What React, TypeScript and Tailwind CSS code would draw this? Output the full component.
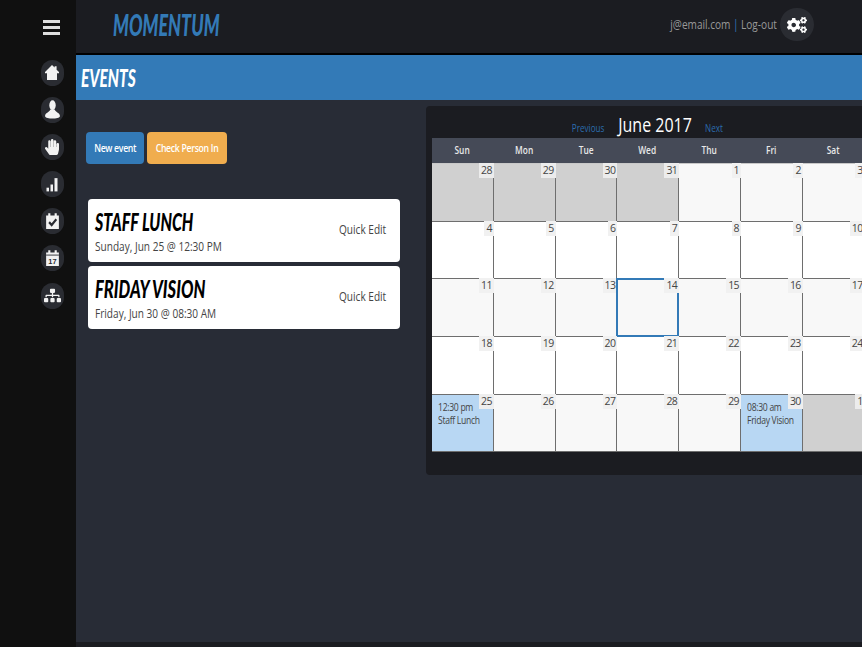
import React from 'react';
import { FaHandPaper, FaSitemap, FaCogs } from 'react-icons/fa';

const HomeIcon = () => (
  <svg viewBox="0 0 16 16" className="h-[17px] w-4" fill="currentColor" preserveAspectRatio="none">
    <path d="M8 1 L1 7.6 V8.8 H3 V15 H13 V8.8 H15 V7.6 L12.6 5.3 V2 H10.6 V3.4 Z" />
  </svg>
);

const UserIcon = () => (
  <svg viewBox="0 0 16 16" className="h-[19px] w-[17px]" fill="currentColor" preserveAspectRatio="none">
    <ellipse cx="8" cy="4.4" rx="3" ry="4.2" />
    <path d="M1 13.4 C1 10.8 5 10.6 6 8 H10 C11 10.6 15 10.8 15 13.4 C15 15 11 15.6 8 15.6 C5 15.6 1 15 1 13.4 Z" />
  </svg>
);

const SignalIcon = () => (
  <svg viewBox="0 0 16 16" className="h-[17px] w-4" fill="currentColor" preserveAspectRatio="none">
    <rect x="2.5" y="11" width="2.5" height="3.5" />
    <rect x="6.5" y="8" width="2.5" height="6.5" />
    <rect x="10.5" y="2" width="3" height="12.5" />
  </svg>
);

const CalendarCheckIcon = () => (
  <svg viewBox="0 0 16 16" className="h-[18px] w-[17px]" preserveAspectRatio="none">
    <path fill="currentColor" d="M2 3 H4 V1 H6 V3 H10 V1 H12 V3 H14 V15 H2 Z" />
    <path fill="none" stroke="#2a2c32" strokeWidth="2" d="M4.8 9 L7.2 11.6 L11.6 6.4" />
  </svg>
);

const CalendarDayIcon = () => (
  <svg viewBox="0 0 16 16" className="h-[18px] w-[17px]" preserveAspectRatio="none">
    <path fill="currentColor" d="M2 3 H4 V1 H6 V3 H10 V1 H12 V3 H14 V15 H2 Z" />
    <rect x="2" y="5" width="12" height="0.8" fill="#2a2c32" />
    <text x="8" y="13.4" textAnchor="middle" fontSize="7" fontWeight="700" fill="#2a2c32" fontFamily="Liberation Sans">17</text>
  </svg>
);

const navIcons = [
  <HomeIcon />,
  <UserIcon />,
  <FaHandPaper className="text-base" />,
  <SignalIcon />,
  <CalendarCheckIcon />,
  <CalendarDayIcon />,
  <FaSitemap className="text-[17px]" />,
];

const weekDays = ['Sun', 'Mon', 'Tue', 'Wed', 'Thu', 'Fri', 'Sat'];

type Tone = 'muted' | 'white' | 'soft' | 'event';
type Day = { n: number; tone: Tone; today?: boolean; time?: string; title?: string };

const makeRow = (nums: number[], tone: Tone): Day[] => nums.map((n) => ({ n, tone }));

const rows: Day[][] = [
  [...makeRow([28, 29, 30, 31], 'muted'), ...makeRow([1, 2, 3], 'soft')],
  makeRow([4, 5, 6, 7, 8, 9, 10], 'white'),
  makeRow([11, 12, 13, 14, 15, 16, 17], 'soft').map((d) => ({ ...d, today: d.n === 14 })),
  makeRow([18, 19, 20, 21, 22, 23, 24], 'white'),
  [
    { n: 25, tone: 'event', time: '12:30 pm', title: 'Staff Lunch' },
    { n: 26, tone: 'soft' },
    { n: 27, tone: 'soft' },
    { n: 28, tone: 'soft' },
    { n: 29, tone: 'soft' },
    { n: 30, tone: 'event', time: '08:30 am', title: 'Friday Vision' },
    { n: 1, tone: 'muted' },
  ],
];

const toneClass = {
  muted: 'bg-[#d0d0d0]',
  white: 'bg-white',
  soft: 'bg-[#f8f8f8]',
  event: 'bg-[#b8d7f3]',
};

const labelTone = {
  muted: 'bg-[#ececec]',
  white: 'bg-[#f1f1f1]',
  soft: 'bg-[#f1f1f1]',
  event: 'bg-[#eeeeee]',
};

const DayCell = ({ day }: { day: Day }) => (
  <div className={`relative h-full border-r border-b border-[#6e6e6e] ${toneClass[day.tone]}`}>
    {day.today && <div className="absolute -top-px -right-px -bottom-px -left-px border-2 border-[#337ab7]" />}
    <span className={`absolute -top-px -right-px min-w-2 px-0.5 pt-[2px] pb-[2px] text-right text-[10.5px] leading-[11px] tracking-[-0.6px] text-[#444] ${labelTone[day.tone]}`}>
      {day.n}
    </span>
    {day.time && (
      <div className="origin-left scale-x-[0.86] px-[7px] pt-1.5 text-[10px] leading-[13px] tracking-[-0.35px] whitespace-nowrap text-[#444]">
        <p>{day.time}</p>
        <p>{day.title}</p>
      </div>
    )}
  </div>
);

const EventCard = ({ title, when, stretch }: { title: string; when: string; stretch: string }) => (
  <div className="flex h-[63px] items-center justify-between rounded bg-white pl-[7px] pr-[14px]">
    <div>
      <h3 className={`origin-left font-['Lato',sans-serif] text-[25px] font-black italic leading-[28px] whitespace-nowrap text-black uppercase ${stretch}`}>
        {title}
      </h3>
      <p className="mt-1 origin-left scale-x-[0.84] text-xs leading-4 whitespace-nowrap text-[#444]">{when}</p>
    </div>
    <span className="mb-0.5 origin-right scale-x-[0.84] text-xs text-[#444]">Quick Edit</span>
  </div>
);

export default function App() {
  return (
    <div className="flex h-[647px] w-[862px] overflow-hidden bg-[#282c36] font-['Open_Sans',sans-serif]">
      {/* Sidebar */}
      <aside className="flex w-[76px] shrink-0 flex-col items-center bg-[#101010] pr-0.5 pl-[30px]">
        <div className="mt-5 mr-0.5 flex h-[15px] w-[17px] flex-col justify-between">
          <span className="h-[3px] bg-[#dedede]" />
          <span className="h-[3px] bg-[#dedede]" />
          <span className="h-[3px] bg-[#dedede]" />
        </div>
        <nav className="mt-[24.5px] flex flex-col gap-[11.2px]">
          {navIcons.map((icon, i) => (
            <div key={i} className="flex h-[26px] w-[23px] items-center justify-center rounded-full bg-[#2a2c32] text-[#f2f2f2]">
              {icon}
            </div>
          ))}
        </nav>
      </aside>

      <div className="flex min-w-0 flex-1 flex-col">
        {/* Top bar */}
        <header className="flex h-[55px] shrink-0 items-center justify-between border-b-2 border-black bg-[#1b1c21] pr-12 pb-1 pl-[37px]">
          <span className="origin-left scale-x-[0.58] font-['Lato',sans-serif] text-[31px] font-black italic leading-none text-[#337ab7] uppercase">
            Momentum
          </span>
          <div className="flex items-center">
            <div className="origin-right scale-x-[0.84] text-xs whitespace-nowrap text-[#999]">
              <span>j@email.com</span>
              <span className="mx-[3px] text-[#337ab7]">|</span>
              <span>Log-out</span>
            </div>
            <span className="ml-[3px] flex h-[33px] w-[34px] items-center justify-center rounded-full bg-[#2a2c32] text-xl text-white">
              <FaCogs />
            </span>
          </div>
        </header>

        {/* Page title */}
        <div className="flex h-[45px] shrink-0 items-center bg-[#337ab7] pl-[5px]">
          <h1 className="origin-left scale-x-[0.62] font-['Lato',sans-serif] text-[25px] font-black italic leading-none text-white uppercase">
            Events
          </h1>
        </div>

        <main className="flex flex-1 items-start">
          {/* Events column */}
          <section className="w-[350px] shrink-0 pt-8 pl-[10px]">
            <div className="flex gap-[3px]">
              <button className="h-8 w-[58px] rounded-sm bg-[#337ab7] pb-1 text-white">
                <span className="inline-block scale-x-[0.87] text-[10px] font-semibold tracking-[-0.35px] whitespace-nowrap">New event</span>
              </button>
              <button className="h-8 w-[80px] rounded-sm bg-[#f0ad4e] pb-1 text-white">
                <span className="inline-block scale-x-[0.87] text-[10px] font-semibold tracking-[-0.35px] whitespace-nowrap">Check Person In</span>
              </button>
            </div>
            <div className="mt-[35px] ml-[2px] flex w-[312px] flex-col gap-1">
              <EventCard title="Staff Lunch" when="Sunday, Jun 25 @ 12:30 PM" stretch="scale-x-[0.64]" />
              <EventCard title="Friday Vision" when="Friday, Jun 30 @ 08:30 AM" stretch="scale-x-[0.66]" />
            </div>
          </section>

          {/* Calendar */}
          <section className="mt-[6px] h-[369px] w-[450px] shrink-0 rounded-l bg-[#1b1c21] pl-1.5">
            <div className="flex h-[32px] items-end justify-center pr-[15px] text-white">
              <span className="scale-x-[0.81] pb-0.5 text-[10px] text-[#2b6cae]">Previous</span>
              <span className="scale-x-[0.8] text-xl leading-[26px]">June 2017</span>
              <span className="ml-0.5 scale-x-[0.81] pb-0.5 text-[10px] text-[#2b6cae]">Next</span>
            </div>
            <div className="grid h-[26px] grid-cols-[repeat(7,61.8px)] items-center border-b border-[#c8c8c8] bg-[#454a57] text-center text-[#e8e8e8]">
              {weekDays.map((d) => (
                <span key={d} className="scale-x-[0.76] pr-0.5 text-[11px] font-semibold">{d}</span>
              ))}
            </div>
            <div className="grid grid-cols-[repeat(7,61.8px)] grid-rows-[repeat(5,57.7px)]">
              {rows.flat().map((day, i) => (
                <DayCell key={i} day={day} />
              ))}
            </div>
          </section>
        </main>

        <footer className="h-[5px] shrink-0 bg-[#1b1c21]" />
      </div>
    </div>
  );
}
